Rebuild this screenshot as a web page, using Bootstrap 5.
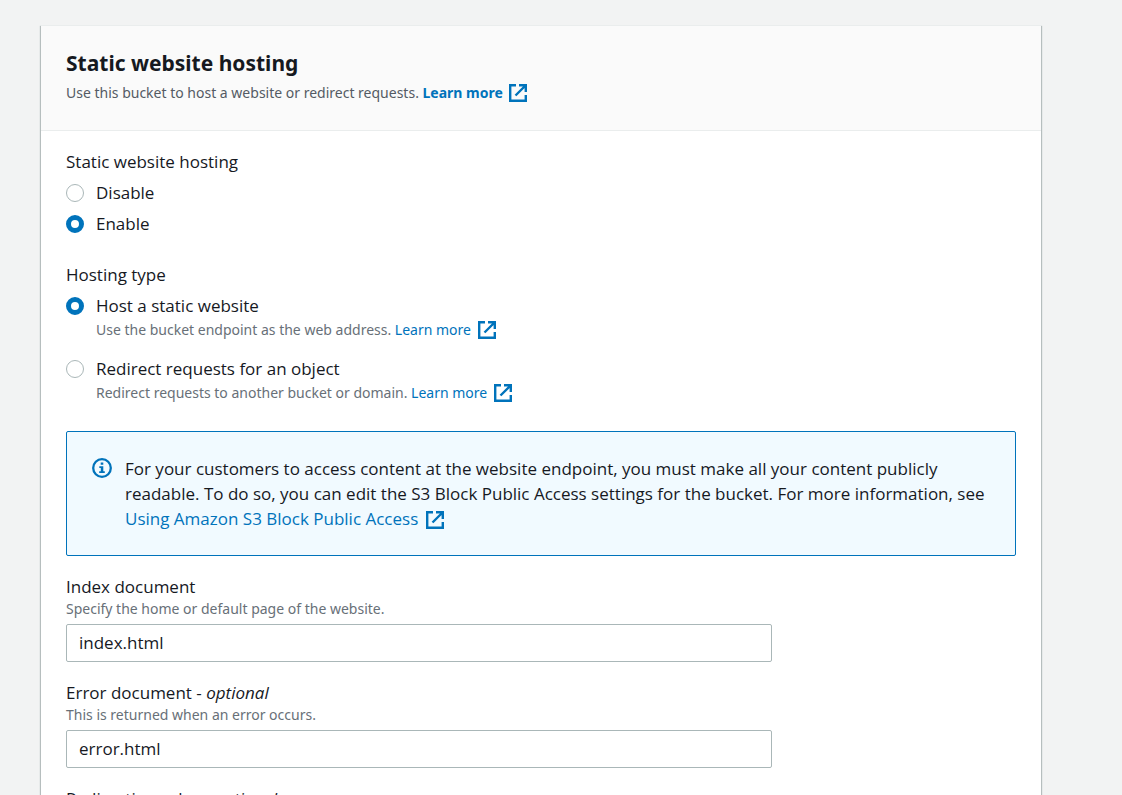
<!DOCTYPE html>
<html lang="en">
<head>
<meta charset="utf-8">
<meta name="viewport" content="width=device-width, initial-scale=1">
<title>Static website hosting</title>
<link href="https://cdn.jsdelivr.net/npm/bootstrap@5.3.0/dist/css/bootstrap.min.css" rel="stylesheet">
<style>
  body { background: #f2f3f3; color: #16191f; font: 17px/25px "Open Sans", "Noto Sans", sans-serif; }
  .page-wrap { padding: 25px 81px 25px 41px; }
  .panel { background: #fff; box-shadow: 0 1px 1px 0 #c3caca, 1px 1px 1px 0 #b4bcbc, -1px 1px 1px 0 #b4bcbc; }
  .panel-head { background: #fafafa; border-top: 1px solid #eaeded; border-bottom: 1px solid #eaeded; padding: 22px 25px 25px; }
  .panel-head h1 { font-family: "Noto Sans", sans-serif; font-size: 21px; line-height: 30px; font-weight: 700; margin-bottom: 2px; }
  .panel-head p, .choice-note, .hint { font-family: "Noto Sans", "Open Sans", sans-serif; font-size: 14px; }
  .panel-head p { color: #545b64; }
  .panel-body { padding: 18px 25px 25px; }
  a { color: #0073bb; text-decoration: none; }
  a:hover { text-decoration: underline; }
  .ext { width: 20px; height: 20px; margin-left: 2px; vertical-align: -5px; }
  .group-label { font-size: 17px; margin-bottom: 6px; }
  .choice-group { margin-bottom: 26px; }
  .choice { display: flex; gap: 12px; }
  .choice input { flex: none; appearance: none; width: 18px; height: 18px; margin: 4px 0 0; border: 1px solid #aab7b8; border-radius: 50%; background: #fff; }
  .choice input:checked { border: 5px solid #0073bb; }
  .stack-tight { display: grid; gap: 6px; }
  .stack-wide { display: grid; gap: 15px; }
  .choice-note { line-height: 23px; color: #687078; }
  .notice { background: #f1faff; border: 1px solid #0073bb; border-radius: 2px; padding: 24px; gap: 12px; margin: 27px 0 18px; }
  .notice-icon { flex: none; width: 22px; height: 22px; margin-top: 1px; }
  .fields { --bs-gutter-x: 25px; row-gap: 18px; }
  .fields label { display: block; }
  .hint { line-height: 19px; color: #687078; margin-bottom: 6px; }
  .fields .form-control { font: inherit; color: inherit; border: 1px solid #aab7b8; border-radius: 2px; padding: 5px 12px 6px; }
</style>
</head>
<body>
<svg class="d-none" xmlns="http://www.w3.org/2000/svg">
  <symbol id="external" viewBox="0 0 20 20">
    <path d="M8 2.200H2.200v15.600h15.600V12M11 2.200h6.800V9M17 3 7.500 12.500" fill="none" stroke="#0073bb" stroke-width="2.400"/>
  </symbol>
</svg>
<main class="page-wrap">
  <form class="panel">
    <header class="panel-head">
      <h1>Static website hosting</h1>
      <p class="mb-0">Use this bucket to host a website or redirect requests. <a class="fw-bold" href="#">Learn more <svg class="ext" aria-hidden="true"><use href="#external"/></svg></a></p>
    </header>
    <div class="panel-body">
      <fieldset class="choice-group">
        <legend class="group-label">Static website hosting</legend>
        <div class="stack-tight">
          <div class="choice"><input type="radio" name="hosting" id="disable"><label for="disable">Disable</label></div>
          <div class="choice"><input type="radio" name="hosting" id="enable" checked><label for="enable">Enable</label></div>
        </div>
      </fieldset>
      <fieldset class="choice-group">
        <legend class="group-label">Hosting type</legend>
        <div class="stack-wide">
          <div class="choice">
            <input type="radio" name="type" id="static" checked>
            <div><label class="d-block" for="static">Host a static website</label>
              <div class="choice-note">Use the bucket endpoint as the web address. <a href="#">Learn more <svg class="ext" aria-hidden="true"><use href="#external"/></svg></a></div></div>
          </div>
          <div class="choice">
            <input type="radio" name="type" id="redirect">
            <div><label class="d-block" for="redirect">Redirect requests for an object</label>
              <div class="choice-note">Redirect requests to another bucket or domain. <a href="#">Learn more <svg class="ext" aria-hidden="true"><use href="#external"/></svg></a></div></div>
          </div>
        </div>
      </fieldset>
      <div class="notice d-flex" role="note">
        <svg class="notice-icon" viewBox="0 0 22 22" aria-hidden="true">
          <circle cx="11" cy="11" r="8.800" fill="none" stroke="#0073bb" stroke-width="2.300"/>
          <path d="M9.700 5.500h2.600v2.300H9.700zM8.300 9.200h4v5h1.500v1.900H8.200v-1.900h1.600V11H8.300z" fill="#0073bb"/>
        </svg>
        <div>For your customers to access content at the website endpoint, you must make all your content publicly readable. To do so, you can edit the S3 Block Public Access settings for the bucket. For more information, see <a href="#">Using Amazon S3 Block Public Access <svg class="ext" aria-hidden="true"><use href="#external"/></svg></a></div>
      </div>
      <div class="row fields">
        <div class="col-9">
          <label for="index">Index document</label>
          <div class="hint" id="index-hint">Specify the home or default page of the website.</div>
          <input class="form-control" id="index" type="text" value="index.html" aria-describedby="index-hint">
        </div>
        <div class="col-9">
          <label for="error">Error document - <i>optional</i></label>
          <div class="hint" id="error-hint">This is returned when an error occurs.</div>
          <input class="form-control" id="error" type="text" value="error.html" aria-describedby="error-hint">
        </div>
        <div class="col-9">
          <label for="rules">Redirection rules - <i>optional</i></label>
          <textarea class="form-control" id="rules" rows="6"></textarea>
        </div>
      </div>
    </div>
  </form>
</main>
<script src="https://cdn.jsdelivr.net/npm/bootstrap@5.3.0/dist/js/bootstrap.bundle.min.js"></script>
</body>
</html>
